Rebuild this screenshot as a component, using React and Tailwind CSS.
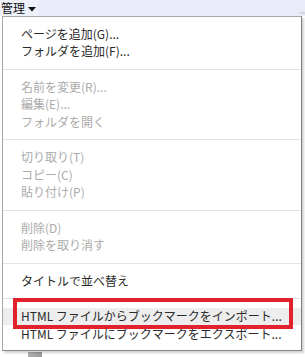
const items = [
  { t: "ページを追加(G)..." },
  { t: "フォルダを追加(F)..." },
  { sep: true },
  { t: "名前を変更(R)...", off: true },
  { t: "編集(E)...", off: true },
  { t: "フォルダを開く", off: true },
  { sep: true },
  { t: "切り取り(T)", off: true },
  { t: "コピー(C)", off: true },
  { t: "貼り付け(P)", off: true },
  { sep: true },
  { t: "削除(D)", off: true },
  { t: "削除を取り消す", off: true },
  { sep: true },
  { t: "タイトルで並べ替え" },
  { sep: true },
  { t: "HTML ファイルからブックマークをインポート...", hover: true },
  { t: "HTML ファイルにブックマークをエクスポート..." },
];

function MenuRow({ item }) {
  if (item.sep) {
    return (
      <div className="h-[18px] flex items-center">
        <div className="h-px w-full bg-[#e4e4e4]"></div>
      </div>
    );
  }
  return (
    <div
      className={
        "h-[17.5px] flex items-center pl-[18px] text-[12px] leading-none whitespace-nowrap " +
        (item.off ? "text-[#ababab] " : "text-[#2a2a2a] ") +
        (item.hover ? "bg-[#ededed]" : "")
      }
    >
      {item.t}
    </div>
  );
}

export default function App() {
  return (
    <div
      className="w-[305px] h-[357px] bg-white overflow-hidden relative"
      style={{ fontFamily: '"Noto Sans CJK JP", "Noto Sans", sans-serif' }}
    >
      {/* top bar */}
      <div className="h-[16px] bg-[#e9ecf8] flex items-center">
        <div className="h-[16px] flex items-center pl-[1px] pr-[2px] bg-[#eef0fa] text-[12px] leading-none text-[#111]">
          管理
          <svg width="8" height="6" viewBox="0 0 8 6" className="ml-[3px] mt-[1px]">
            <polygon points="0,1 8,1 4,5.5" fill="#111" />
          </svg>
        </div>
        <div className="ml-auto mr-0 mt-[10px] w-[5px] h-[2px] bg-[#d6d8de]"></div>
      </div>

      {/* menu */}
      <div className="ml-[2px] w-[300px] bg-white border border-[#a8a8a8] border-r-[#7d7d7d] border-b-[#8a8a8a] shadow-[2px_2px_2px_rgba(0,0,0,0.18)] pt-[8px] pb-[7px] relative">
        {items.map((it, i) => (
          <MenuRow key={i} item={it} />
        ))}
        <div className="absolute left-[10px] top-[281px] w-[280px] h-[31px] border-4 border-[#e1222c]"></div>
      </div>

      <div className="ml-[28px] mt-[1px] w-[14px] h-[8px] bg-gradient-to-r from-[#b0b0b0] to-[#9a9a9a]"></div>
    </div>
  );
}
